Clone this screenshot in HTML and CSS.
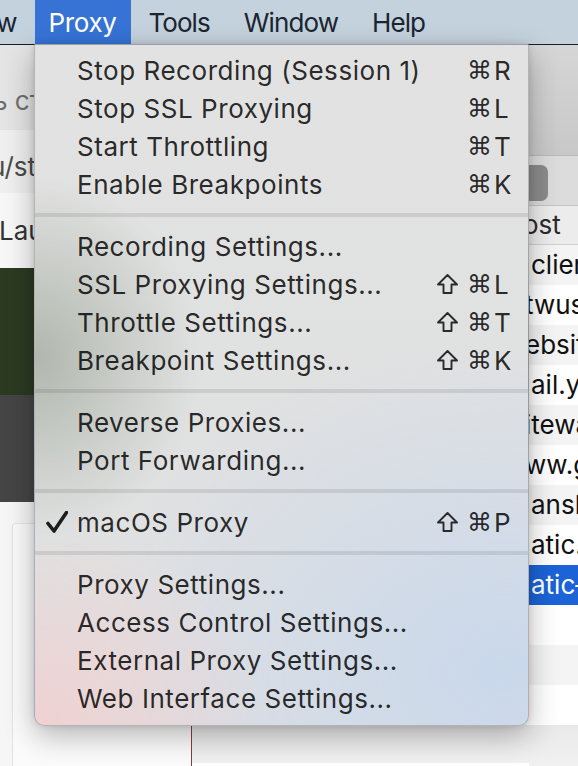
FILE: index.html
```html
<!DOCTYPE html>
<html lang="en">
<head>
	<meta charset="UTF-8">
	<title>Proxy menu</title>
	<link rel="stylesheet" href="styles.css">
</head>
<body>
	<div class="screen">
		<nav class="menubar">
			<span class="bar-item bar-cut">View</span>
			<span class="bar-item active">Proxy</span>
			<span class="bar-item">Tools</span>
			<span class="bar-item">Window</span>
			<span class="bar-item">Help</span>
		</nav>

		<!-- window behind the menu -->
		<div class="desk">
			<div class="app-left">
				<div class="band band-toolbar"><span class="cut-a">ь стр</span></div>
				<div class="band band-url"><span class="cut-b">u/st</span></div>
				<div class="band band-tab"><span class="cut-c">Lau</span></div>
				<div class="band band-green"></div>
				<div class="band band-dark"></div>
				<div class="band band-page"><div class="card"></div></div>
			</div>
			<div class="app-mid">
				<div class="mid-foot"></div>
			</div>
			<div class="app-right">
				<div class="rt-toolbar"></div>
				<div class="rt-filter"><span class="pill"></span></div>
				<div class="rt-head"><span class="clip">ost</span></div>
				<div class="rt-row odd">clients</div>
				<div class="rt-row"><span class="clip">twus</span></div>
				<div class="rt-row odd"><span class="clip">ebsite</span></div>
				<div class="rt-row">ail.yahoo</div>
				<div class="rt-row odd"><span class="clip">itewa</span></div>
				<div class="rt-row"><span class="clip">ww.g</span></div>
				<div class="rt-row odd">ansla</div>
				<div class="rt-row">atic.a</div>
				<div class="rt-row selected">atic–</div>
				<div class="rt-row"></div>
				<div class="rt-row odd"></div>
				<div class="rt-row"></div>
				<div class="rt-foot"></div>
			</div>
		</div>

		<!-- Proxy dropdown -->
		<div class="menu">
			<div class="item"><span class="mark"></span><span class="label">Stop Recording (Session 1)</span><span class="keys"><i></i><i class="cmd">⌘</i><b>R</b></span></div>
			<div class="item"><span class="mark"></span><span class="label">Stop SSL Proxying</span><span class="keys"><i></i><i class="cmd">⌘</i><b>L</b></span></div>
			<div class="item"><span class="mark"></span><span class="label">Start Throttling</span><span class="keys"><i></i><i class="cmd">⌘</i><b>T</b></span></div>
			<div class="item"><span class="mark"></span><span class="label">Enable Breakpoints</span><span class="keys"><i></i><i class="cmd">⌘</i><b>K</b></span></div>
			<div class="sep"></div>
			<div class="item"><span class="mark"></span><span class="label">Recording Settings...</span></div>
			<div class="item"><span class="mark"></span><span class="label">SSL Proxying Settings...</span><span class="keys"><i class="shift"><svg width="23" height="22" viewBox="0 0 23 22"><path d="M11.5 2 L21 11.5 H15.5 V20 H7.5 V11.5 H2 Z" fill="none" stroke="#2a2a2a" stroke-width="1.9" stroke-linejoin="round"/></svg></i><i class="cmd">⌘</i><b>L</b></span></div>
			<div class="item"><span class="mark"></span><span class="label">Throttle Settings...</span><span class="keys"><i class="shift"><svg width="23" height="22" viewBox="0 0 23 22"><path d="M11.5 2 L21 11.5 H15.5 V20 H7.5 V11.5 H2 Z" fill="none" stroke="#2a2a2a" stroke-width="1.9" stroke-linejoin="round"/></svg></i><i class="cmd">⌘</i><b>T</b></span></div>
			<div class="item"><span class="mark"></span><span class="label">Breakpoint Settings...</span><span class="keys"><i class="shift"><svg width="23" height="22" viewBox="0 0 23 22"><path d="M11.5 2 L21 11.5 H15.5 V20 H7.5 V11.5 H2 Z" fill="none" stroke="#2a2a2a" stroke-width="1.9" stroke-linejoin="round"/></svg></i><i class="cmd">⌘</i><b>K</b></span></div>
			<div class="sep"></div>
			<div class="item"><span class="mark"></span><span class="label">Reverse Proxies...</span></div>
			<div class="item"><span class="mark"></span><span class="label">Port Forwarding...</span></div>
			<div class="sep"></div>
			<div class="item">
				<span class="mark">
					<svg width="22" height="22" viewBox="0 0 22 22"><path d="M2 12.5 L8 20 L20.5 1.5" fill="none" stroke="#1d1d1d" stroke-width="3.6" stroke-linecap="round" stroke-linejoin="round"/></svg>
				</span>
				<span class="label">macOS Proxy</span><span class="keys"><i class="shift"><svg width="23" height="22" viewBox="0 0 23 22"><path d="M11.5 2 L21 11.5 H15.5 V20 H7.5 V11.5 H2 Z" fill="none" stroke="#2a2a2a" stroke-width="1.9" stroke-linejoin="round"/></svg></i><i class="cmd">⌘</i><b>P</b></span>
			</div>
			<div class="sep"></div>
			<div class="item"><span class="mark"></span><span class="label">Proxy Settings...</span></div>
			<div class="item"><span class="mark"></span><span class="label">Access Control Settings...</span></div>
			<div class="item"><span class="mark"></span><span class="label">External Proxy Settings...</span></div>
			<div class="item"><span class="mark"></span><span class="label">Web Interface Settings...</span></div>
		</div>
	</div>
</body>
</html>
```

FILE: styles.css
```css
*{
	margin: 0;
	padding: 0;
	box-sizing: border-box;
}
body{
	font-family: Inter, "Noto Sans", sans-serif;
	background: #f4f4f4;
}
.screen{
	position: relative;
	width: 578px;
	height: 766px;
	overflow: hidden;
}

/* menu bar */
.menubar{
	display: flex;
	height: 45px;
	background: #c4d2dd;
	border-bottom: 1px solid #1c1f22;
	font-size: 26px;
	color: #1b2530;
	white-space: nowrap;
}
.bar-item{
	display: flex;
	align-items: center;
	padding: 0 17px;
	letter-spacing: -0.9px;
}
.bar-cut{
	margin-left: -57px;
	padding-right: 18px;
}
.bar-item.active{
	background: #3673d5;
	color: #fff;
	padding: 0 15px 0 14px;
	letter-spacing: -0.4px;
}

/* window behind */
.desk{
	display: flex;
	height: 721px;
	font-size: 26px;
	white-space: nowrap;
}
.app-left{
	width: 191px;
	display: flex;
	flex-direction: column;
	overflow: hidden;
}
.band{
	display: flex;
	align-items: center;
}
.band-toolbar{
	height: 85px;
	background: #e4e4e4;
	color: #6f6f6f;
	padding-top: 26px;
}
.band-url{
	height: 63px;
	background: #efefef;
	color: #4a4a4a;
	padding-top: 10px;
}
.band-tab{
	height: 75px;
	background: #f7f7f7;
	color: #333;
}
.band-green{
	height: 127px;
	background: #2c3a21;
}
.band-dark{
	height: 107px;
	background: #454545;
}
.band-page{
	flex: 1;
	background: #f6f6f6;
	align-items: stretch;
	padding: 21px 0 0 12px;
}
.card{
	flex: 1;
	background: #fbfbfb;
	border-left: 1px solid #e2e2e2;
	border-top: 1px solid #e6e6e6;
	border-radius: 4px 0 0 0;
}
.cut-a{ margin-left: -7px; }
.cut-b{ margin-left: -10px; }
.cut-c{ margin-left: -1px; }

.app-mid{
	flex: 1;
	display: flex;
	flex-direction: column;
	justify-content: flex-end;
	border-left: 1px solid #8a3c3c;
	background: #fff;
}
.mid-foot{
	height: 38px;
	margin-bottom: 3px;
	background: linear-gradient(#e9e9e9, #f1f1f1);
}

.app-right{
	width: 49px;
	display: flex;
	flex-direction: column;
	overflow: hidden;
	color: #111;
}
.rt-toolbar{
	height: 111px;
	background: linear-gradient(#d6d6d6, #c8c8c8);
	border-bottom: 1px solid #b9b9b9;
}
.rt-filter{
	height: 50px;
	background: #dcdcdc;
	border-bottom: 1px solid #c4c4c4;
	padding-top: 9px;
}
.pill{
	display: block;
	width: 19px;
	height: 36px;
	background: #8b8b8b;
	border-radius: 0 7px 7px 0;
}
.rt-head{
	height: 39px;
	line-height: 38px;
	background: #ececec;
	border-bottom: 1px solid #d0d0d0;
	color: #2a2a2a;
}
.rt-row{
	height: 40px;
	line-height: 40px;
	background: #fff;
	padding-left: 2px;
}
.rt-row.odd{
	background: #f4f4f4;
}
.rt-row.selected{
	background: #1b63d6;
	color: #fff;
}
.clip{
	margin-left: -6px;
}
.rt-foot{
	flex: 1;
	background: linear-gradient(#e9e9e9, #f1f1f1);
}

/* dropdown */
.menu{
	position: absolute;
	left: 34px;
	top: 44px;
	width: 495px;
	height: 682px;
	padding: 6px 0 8px;
	border: 1px solid rgba(0, 0, 0, 0.2);
	border-top-color: #989ea4;
	border-radius: 0 0 10px 10px;
	box-shadow: 0 10px 30px rgba(0, 0, 0, 0.28), 0 0 6px rgba(0, 0, 0, 0.12);
	background:
		radial-gradient(ellipse 230px 250px at 0% 46%, rgba(110, 125, 100, 0.42), rgba(110, 125, 100, 0) 72%),
		radial-gradient(ellipse 320px 260px at 0% 100%, rgba(250, 200, 200, 0.62), rgba(250, 200, 200, 0) 75%),
		radial-gradient(ellipse 520px 420px at 95% 92%, rgba(196, 214, 238, 0.8), rgba(196, 214, 238, 0) 78%),
		linear-gradient(#e2e2e2, #dfe0e1);
	font-size: 26px;
	color: rgba(0, 0, 0, 0.84);
	white-space: nowrap;
}
.item{
	display: flex;
	align-items: center;
	height: 38px;
	padding-right: 16px;
}
.mark{
	width: 42px;
	display: flex;
	align-items: center;
	padding-left: 11px;
}
.label{
	flex: 1;
	letter-spacing: 0.55px;
}
.keys{
	display: grid;
	grid-template-columns: 30px 26px 18px;
	align-items: center;
}
.keys i{
	font-style: normal;
	display: flex;
	align-items: center;
}
.keys .cmd{
	font-family: "DejaVu Sans", sans-serif;
	font-size: 25px;
	margin-left: -1px;
}
.keys .shift{
	margin-left: -2px;
}
.keys b{
	font-weight: normal;
}
.sep{
	height: 4px;
	margin: 10px 0;
	background: rgba(0, 0, 0, 0.09);
}
```
